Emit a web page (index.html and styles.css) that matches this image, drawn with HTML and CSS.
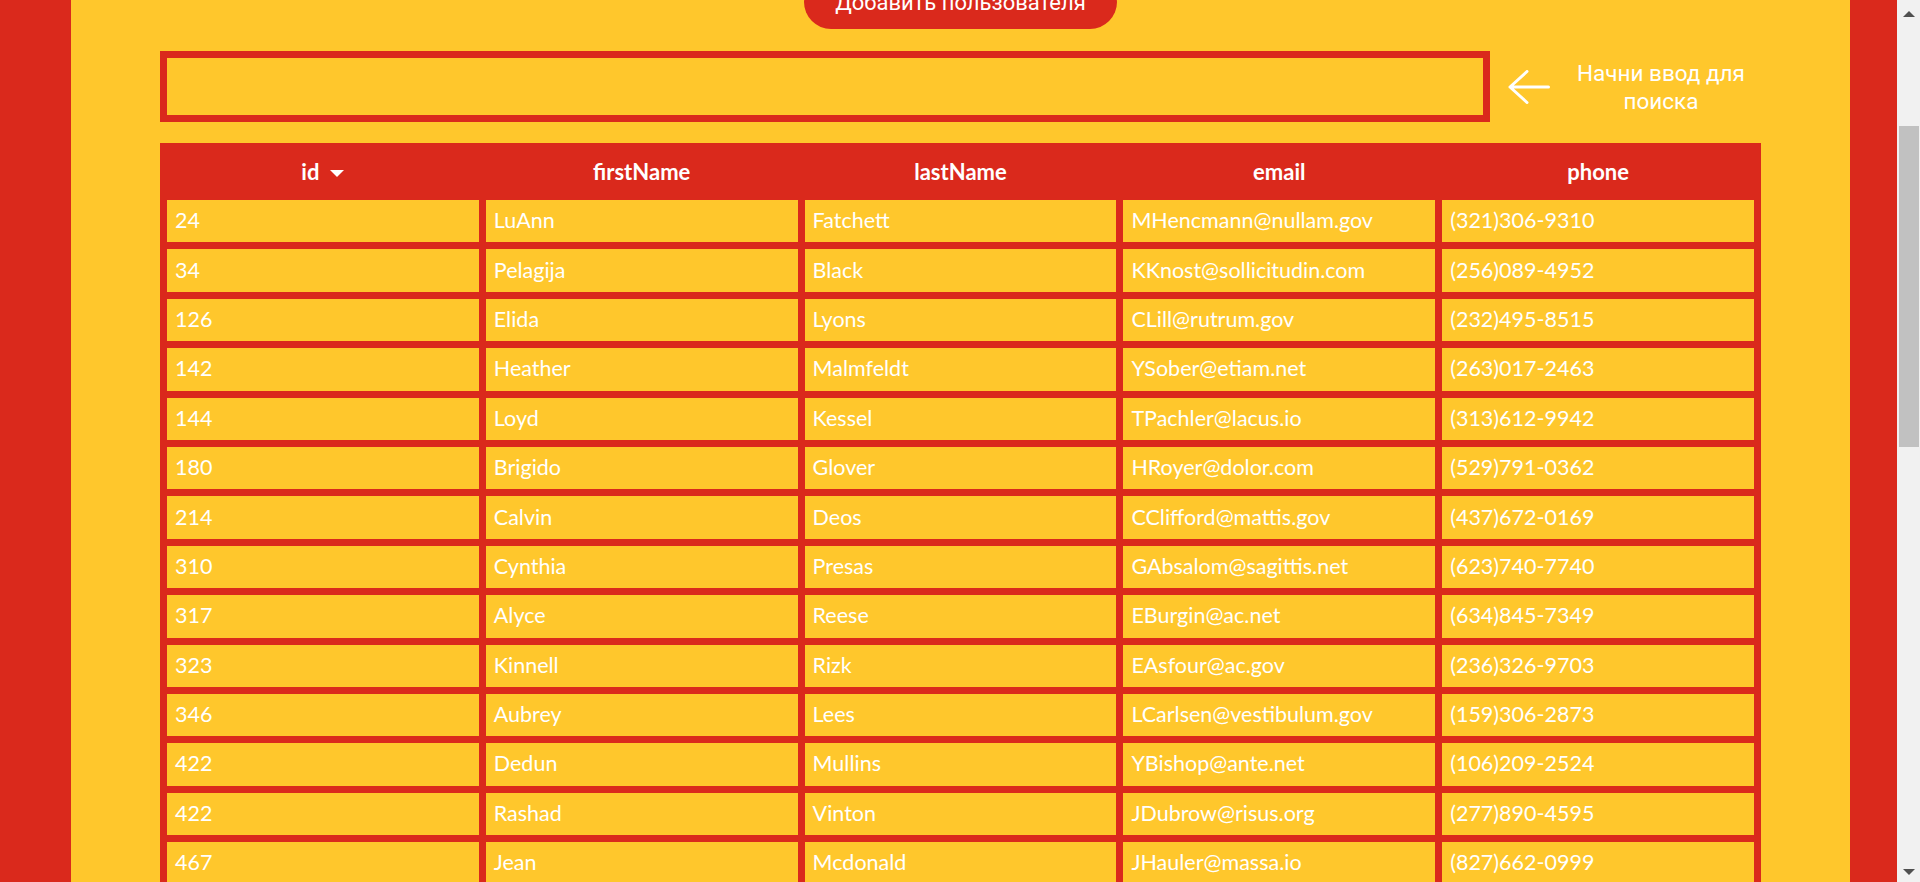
FILE: index.html
```html
<!DOCTYPE html>
<html lang="ru">
<head>
<meta charset="utf-8">
<title>Пользователи</title>
<link rel="stylesheet" href="styles.css">
</head>
<body>
<main class="page">
  <div class="actions">
    <button class="add-btn" type="button">Добавить пользователя</button>
  </div>
  <div class="search-row">
    <input class="search-input" type="text" aria-label="Поиск">
    <svg class="hint-arrow" width="42" height="34" viewBox="0 0 42 34" aria-hidden="true">
      <path d="M2 17 H40.5 M19 1.5 L2 17 L19 32.5" fill="none" stroke="#fff" stroke-width="3" stroke-linecap="round" stroke-linejoin="round"/>
    </svg>
    <div class="hint-text">Начни ввод для поиска</div>
  </div>
  <table class="users">
    <thead>
      <tr>
        <th><span class="sort">id<svg class="sort-icon" width="14" height="7" viewBox="0 0 14 7" aria-hidden="true"><path d="M0 0 H14 L7 7 Z" fill="#fff"/></svg></span></th>
        <th>firstName</th>
        <th>lastName</th>
        <th>email</th>
        <th>phone</th>
      </tr>
    </thead>
    <tbody>
      <tr><td>24</td><td>LuAnn</td><td>Fatchett</td><td>MHencmann@nullam.gov</td><td>(321)306-9310</td></tr>
      <tr><td>34</td><td>Pelagija</td><td>Black</td><td>KKnost@sollicitudin.com</td><td>(256)089-4952</td></tr>
      <tr><td>126</td><td>Elida</td><td>Lyons</td><td>CLill@rutrum.gov</td><td>(232)495-8515</td></tr>
      <tr><td>142</td><td>Heather</td><td>Malmfeldt</td><td>YSober@etiam.net</td><td>(263)017-2463</td></tr>
      <tr><td>144</td><td>Loyd</td><td>Kessel</td><td>TPachler@lacus.io</td><td>(313)612-9942</td></tr>
      <tr><td>180</td><td>Brigido</td><td>Glover</td><td>HRoyer@dolor.com</td><td>(529)791-0362</td></tr>
      <tr><td>214</td><td>Calvin</td><td>Deos</td><td>CClifford@mattis.gov</td><td>(437)672-0169</td></tr>
      <tr><td>310</td><td>Cynthia</td><td>Presas</td><td>GAbsalom@sagittis.net</td><td>(623)740-7740</td></tr>
      <tr><td>317</td><td>Alyce</td><td>Reese</td><td>EBurgin@ac.net</td><td>(634)845-7349</td></tr>
      <tr><td>323</td><td>Kinnell</td><td>Rizk</td><td>EAsfour@ac.gov</td><td>(236)326-9703</td></tr>
      <tr><td>346</td><td>Aubrey</td><td>Lees</td><td>LCarlsen@vestibulum.gov</td><td>(159)306-2873</td></tr>
      <tr><td>422</td><td>Dedun</td><td>Mullins</td><td>YBishop@ante.net</td><td>(106)209-2524</td></tr>
      <tr><td>422</td><td>Rashad</td><td>Vinton</td><td>JDubrow@risus.org</td><td>(277)890-4595</td></tr>
      <tr><td>467</td><td>Jean</td><td>Mcdonald</td><td>JHauler@massa.io</td><td>(827)662-0999</td></tr>
    </tbody>
  </table>
</main>
<div class="scrollbar" aria-hidden="true">
  <span class="sb-btn sb-up"><span class="sb-arrow-up"></span></span>
  <span class="sb-track"><span class="sb-thumb"></span></span>
  <span class="sb-btn sb-down"><span class="sb-arrow-down"></span></span>
</div>
<script src="script.js"></script>
</body>
</html>
```
FILE: styles.css
```css
html, body {
  margin: 0;
}

body {
  background: #da291c;
  padding: 0 70px 0 71px;
  font-family: "Lato", "Liberation Sans", sans-serif;
  color: #fff;
}

.page {
  background: #ffc72c;
  min-height: 2297px;
  box-sizing: border-box;
  padding: 258px 89px 0;
}

.actions {
  display: flex;
  justify-content: center;
}

.add-btn {
  width: 313px;
  height: 54px;
  border: 0;
  border-radius: 27px;
  background: #da291c;
  color: #fff;
  font-family: Roboto, "Liberation Sans", sans-serif;
  font-size: 22px;
  padding: 0;
}

.search-row {
  display: flex;
  align-items: center;
  margin-top: 22px;
}

.search-input {
  flex: 1;
  min-width: 0;
  height: 71px;
  box-sizing: border-box;
  border: 7px solid #da291c;
  background: transparent;
  outline: none;
  font: inherit;
  font-size: 21px;
  color: #fff;
}

.hint-arrow {
  flex: none;
  margin-left: 18px;
}

.hint-text {
  flex: none;
  width: 200px;
  margin-left: 11px;
  text-align: center;
  font-family: Roboto, "Liberation Sans", sans-serif;
  font-size: 22.5px;
  line-height: 28px;
}

.users {
  width: 100%;
  margin-top: 21px;
  table-layout: fixed;
  border-collapse: separate;
  border-spacing: 7px;
  background: #da291c;
}

.users th {
  height: 43px;
  padding: 0;
  font-size: 22px;
  font-weight: 700;
  text-align: center;
}

.sort {
  display: inline-flex;
  align-items: center;
  gap: 11px;
}

.sort-icon {
  margin-top: 4px;
}

.users td {
  height: 42.4px;
  box-sizing: border-box;
  padding: 0 8px 2px;
  background: #ffc72c;
  font-size: 21.5px;
  white-space: nowrap;
  overflow: hidden;
}

/* browser scrollbar as it appears in the captured window */
.scrollbar {
  position: fixed;
  top: 0;
  right: 0;
  bottom: 0;
  width: 23px;
  background: #f1f1f1;
  display: flex;
  flex-direction: column;
}

.sb-btn {
  flex: none;
  height: 23px;
  box-sizing: border-box;
  display: flex;
  justify-content: center;
  padding-left: 1px;
}

.sb-up {
  padding-top: 11px;
}

.sb-down {
  padding-top: 10px;
}

.sb-arrow-up,
.sb-arrow-down {
  width: 0;
  height: 0;
  border-left: 6px solid transparent;
  border-right: 6px solid transparent;
}

.sb-arrow-up {
  border-bottom: 6px solid #505050;
}

.sb-arrow-down {
  border-top: 6px solid #505050;
}

.sb-track {
  flex: 1;
  padding-top: 103px;
}

.sb-thumb {
  display: block;
  height: 321px;
  margin: 0 1px 0 2px;
  background: #c1c1c1;
}
```
FILE: script.js
```js
history.scrollRestoration = 'manual';
window.scrollTo(0, 283);
```
